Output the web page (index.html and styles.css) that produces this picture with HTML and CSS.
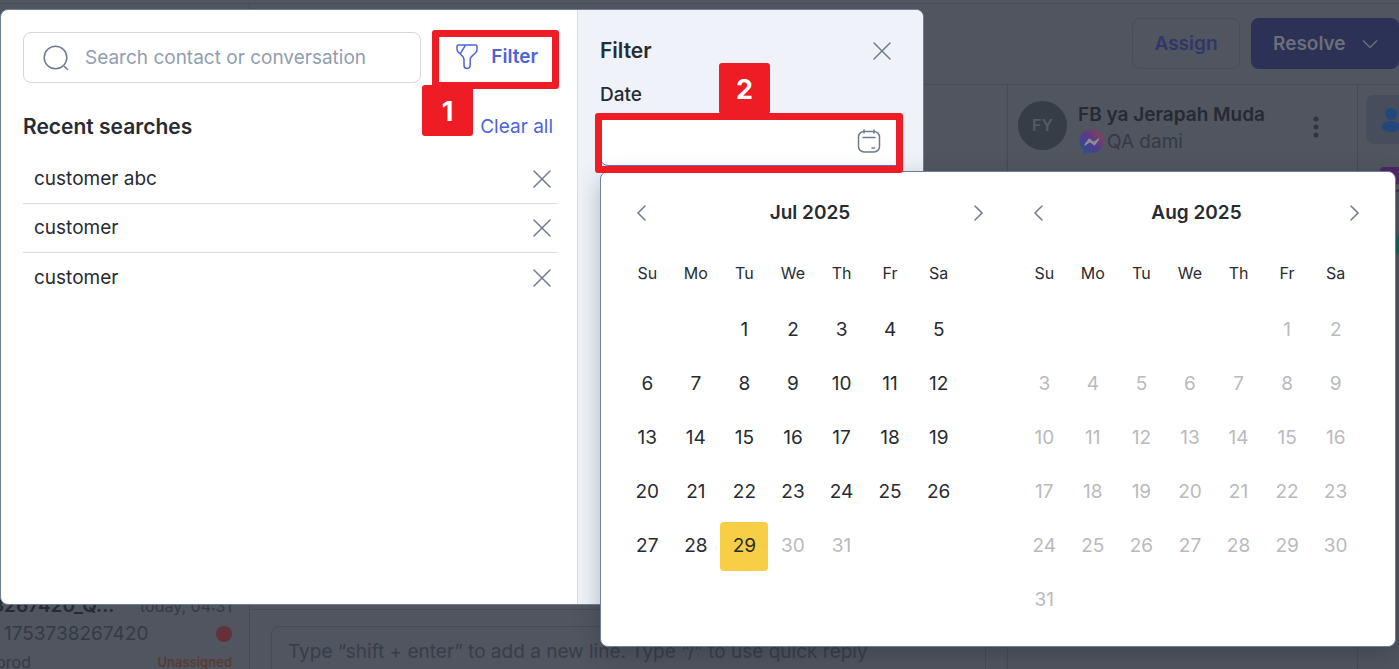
FILE: index.html
```html
<!DOCTYPE html>
<html lang="en">
<head>
  <meta charset="UTF-8">
  <title>Inbox</title>
  <link rel="stylesheet" href="styles.css">
</head>
<body>

<div class="app">
  <aside class="inbox">
    <div class="conversation">
      <div class="conversation-row">
        <span class="conversation-name">3267420_Q...</span>
        <span class="conversation-time">today, 04:31</span>
      </div>
      <div class="conversation-row">
        <span class="conversation-id">1753738267420</span>
        <span class="status-dot"></span>
      </div>
      <div class="conversation-row">
        <span class="conversation-tag">prod</span>
        <span class="unassigned">Unassigned</span>
      </div>
    </div>
  </aside>

  <main class="main">
    <header class="toolbar">
      <button class="btn btn-outline" type="button">Assign</button>
      <button class="btn btn-solid" type="button">Resolve
        <svg width="18" height="18" viewBox="0 0 18 18"><path d="M2 5.500l7 7 7-7"/></svg>
      </button>
    </header>

    <div class="content">
      <section class="thread">
        <div class="composer">
          <textarea class="composer-input" aria-label="Message" placeholder="Type “shift + enter” to add a new line. Type “/” to use quick reply"></textarea>
        </div>
      </section>

      <section class="details">
        <div class="contact">
          <div class="avatar">FY</div>
          <div class="contact-info">
            <div class="contact-name">FB ya Jerapah Muda</div>
            <div class="contact-channel">
              <svg width="26" height="26" viewBox="0 0 24 24">
                <defs>
                  <linearGradient id="messenger" x1="0" y1="1" x2="1" y2="0">
                    <stop offset="0" stop-color="#1d5596"/>
                    <stop offset="0.5" stop-color="#553a88"/>
                    <stop offset="1" stop-color="#91424f"/>
                  </linearGradient>
                </defs>
                <path d="M12.500 0.500C6 0.500 1.500 5.200 1.500 11.500c0 3.300 1.300 6 3.700 8v4l3.700-2c1.300.400 2.300.600 3.600.600 6.500 0 11-4.400 11-10.600S19 .500 12.500 .500z" fill="url(#messenger)"/>
                <path d="M6 15l4.300-5.700 4.200 3 5-3.300-4.300 5.700-4.200-3z" fill="#8d8c97" stroke="#8d8c97"/>
              </svg>
              <span>QA dami</span>
            </div>
          </div>
          <button class="kebab" type="button" aria-label="More">
            <svg width="6" height="22" viewBox="0 0 6 22"><circle cx="3" cy="3" r="2.500"/><circle cx="3" cy="11" r="2.500"/><circle cx="3" cy="19" r="2.500"/></svg>
          </button>
        </div>
      </section>

      <nav class="rail">
        <a class="rail-item rail-active" href="#" aria-label="Contact">
          <svg width="20" height="26" viewBox="0 0 20 26"><circle cx="10" cy="7" r="6"/><ellipse cx="10" cy="19.500" rx="9" ry="5.500"/></svg>
        </a>
        <a class="rail-item" href="#" aria-label="Apps">
          <svg width="22" height="28" viewBox="0 0 22 28"><rect width="22" height="17" rx="4" fill="#4f2566"/><path d="M14 24c3 0 6-1 8-3" fill="none" stroke="#4f2566" stroke-width="2"/></svg>
        </a>
        <a class="rail-item" href="#" aria-label="Activity">
          <svg width="22" height="26" viewBox="0 0 22 26"><circle cx="13" cy="5" r="4" fill="#145f61"/><circle cx="15" cy="16" r="9" fill="#145f61"/></svg>
        </a>
      </nav>
    </div>
  </main>
</div>

<div class="search-modal">
  <section class="search-pane">
    <div class="search-row">
      <label class="search-box">
        <svg width="26" height="26" viewBox="0 0 26 26"><circle cx="12.500" cy="12.500" r="11.300"/><path d="M21.500 21.500l3 3"/></svg>
        <input type="text" aria-label="Search" placeholder="Search contact or conversation">
      </label>
      <button class="filter-btn" type="button">
        <svg width="22" height="26" viewBox="0 0 22 26"><path d="M2.500 1h17c1 0 1.500.700 1.500 1.500v2.700c0 1.300-.700 2.800-1.700 3.800l-3.800 3.600c-.900.800-1.300 1.800-1.300 3v5.200c0 2.500-1.500 3.700-3.200 3.700s-3-1.200-3-3.200v-5.500c0-1.300-.400-2.400-1.200-3.300L2.400 8.200C1.500 7.200 1 6.200 1 5V2.500C1 1.700 1.600 1 2.500 1zM9.500 1.200L4 10.200"/></svg>
        Filter
      </button>
    </div>

    <div class="recent-header">
      <h2>Recent searches</h2>
      <a href="#">Clear all</a>
    </div>

    <ul class="recent-list">
      <li>customer abc
        <button class="close" type="button" aria-label="Remove"><svg width="18" height="18" viewBox="0 0 18 18"><path d="M1 1l16 16M17 1L1 17"/></svg></button>
      </li>
      <li>customer
        <button class="close" type="button" aria-label="Remove"><svg width="18" height="18" viewBox="0 0 18 18"><path d="M1 1l16 16M17 1L1 17"/></svg></button>
      </li>
      <li>customer
        <button class="close" type="button" aria-label="Remove"><svg width="18" height="18" viewBox="0 0 18 18"><path d="M1 1l16 16M17 1L1 17"/></svg></button>
      </li>
    </ul>
  </section>

  <section class="filter-pane">
    <div class="filter-header">
      <h2>Filter</h2>
      <button class="close" type="button" aria-label="Close"><svg width="18" height="18" viewBox="0 0 18 18"><path d="M1 1l16 16M17 1L1 17"/></svg></button>
    </div>
    <label class="date-label" for="date">Date</label>
    <div class="date-box">
      <input id="date" type="text">
      <svg width="24" height="24" viewBox="0 0 24 24"><rect x="1.500" y="2.500" width="21" height="20.500" rx="5.500"/><path d="M7 1v3M17 1v3M6 8.500h12M15 19h2.500"/></svg>
    </div>
  </section>
</div>

<div class="picker">
  <section class="month month-first">
    <div class="month-header">
      <button type="button" aria-label="Previous month"><svg width="12" height="18" viewBox="0 0 12 18"><path d="M10 2L3 9l7 7"/></svg></button>
      <h3>Jul 2025</h3>
      <button type="button" aria-label="Next month"><svg width="12" height="18" viewBox="0 0 12 18"><path d="M2 2l7 7-7 7"/></svg></button>
    </div>
    <table class="days" data-start="2" data-count="31" data-today="29"></table>
  </section>
  <section class="month">
    <div class="month-header">
      <button type="button" aria-label="Previous month"><svg width="12" height="18" viewBox="0 0 12 18"><path d="M10 2L3 9l7 7"/></svg></button>
      <h3>Aug 2025</h3>
      <button type="button" aria-label="Next month"><svg width="12" height="18" viewBox="0 0 12 18"><path d="M2 2l7 7-7 7"/></svg></button>
    </div>
    <table class="days" data-start="5" data-count="31" data-today="0"></table>
  </section>
</div>

<div class="outline outline-filter"></div>
<div class="step step-one">1</div>
<div class="outline outline-date"></div>
<div class="step step-two">2</div>

<script src="script.js"></script>
</body>
</html>
```

FILE: styles.css
```css
* {
  box-sizing: border-box;
}

body {
  margin: 0;
  height: 100vh;
  overflow: hidden;
  position: relative;
  background: #50555f;
  color: #272b33;
  font-family: Inter, "Liberation Sans", sans-serif;
  font-size: 19px;
  line-height: 24px;
}

button, input, textarea {
  font: inherit;
  color: inherit;
  background: none;
  border: none;
  padding: 0;
  outline: none;
}

svg {
  display: block;
  flex: none;
}

h2, h3 {
  margin: 0;
  font-weight: 600;
}

h2 {
  font-size: 21px;
}

h3 {
  font-size: 19px;
}

/* page behind the dialog */
.app {
  display: flex;
  height: 100%;
  padding-top: 3px;
}

.inbox {
  width: 250px;
  flex: none;
  display: flex;
  align-items: flex-end;
  border-top: 1px solid #464b57;
  border-right: 1px solid #464b57;
}

.conversation {
  width: 100%;
  margin-bottom: -7px;
  padding-right: 17px;
  color: #353a46;
}

.conversation-row {
  display: flex;
  justify-content: space-between;
  align-items: center;
  height: 28px;
}

.conversation-name {
  margin-left: -8px;
  font-weight: 600;
  color: #262a33;
}

.conversation-time,
.conversation-tag {
  font-size: 16px;
}

.conversation-id {
  padding-left: 4px;
}

.conversation-tag {
  margin-left: -4px;
}

.status-dot {
  width: 16px;
  height: 16px;
  border-radius: 50%;
  background: #64303a;
}

.unassigned {
  font-size: 13px;
  font-weight: 600;
  color: #583c35;
}

.main {
  flex: 1;
  display: flex;
  flex-direction: column;
  border-top: 1px solid #464b57;
}

.toolbar {
  display: flex;
  justify-content: flex-end;
  gap: 11px;
  height: 81px;
  padding-top: 14px;
  border-bottom: 1px solid #464b57;
}

.btn {
  height: 51px;
  border-radius: 8px;
  font-weight: 600;
}

.btn-outline {
  width: 108px;
  border: 1px solid #484d5a;
  color: #2f3769;
}

.btn-solid {
  display: flex;
  align-items: center;
  gap: 15px;
  width: 148px;
  padding-left: 22px;
  background: #2b3256;
  color: #6a6f7a;
}

.btn-solid svg {
  fill: none;
  stroke: #6a6f7a;
  stroke-width: 1.5;
}

.content {
  flex: 1;
  display: flex;
}

.thread {
  flex: 1;
  display: flex;
  align-items: flex-end;
}

.composer {
  width: 100%;
  height: 60px;
  padding: 16px 21px 0;
  border-top: 1px solid #464b57;
}

.composer-input {
  display: block;
  width: 100%;
  height: 60px;
  padding: 13px 16px;
  border: 1px solid #464b57;
  border-radius: 8px;
  resize: none;
  overflow: hidden;
}

.composer-input::placeholder {
  color: #383d4a;
}

.details {
  width: 350px;
  border-left: 1px solid #464b57;
}

.contact {
  display: flex;
  align-items: flex-start;
  gap: 11px;
  padding: 16px 38px 0 10px;
}

.avatar {
  width: 49px;
  height: 49px;
  border-radius: 50%;
  background: #373d47;
  color: #555a65;
  font-size: 16px;
  font-weight: 600;
  line-height: 49px;
  text-align: center;
}

.contact-info {
  flex: 1;
  color: #353a46;
}

.contact-name {
  line-height: 27px;
  font-weight: 600;
  color: #262a33;
}

.contact-channel {
  display: flex;
  align-items: center;
  gap: 3px;
  height: 27px;
}

.kebab {
  height: 52px;
}

.kebab svg {
  fill: #303541;
}

.rail {
  width: 42px;
  overflow: hidden;
  border-left: 1px solid #464b57;
  padding: 10px 0 0 8px;
}

.rail-item {
  display: flex;
  align-items: center;
  justify-content: center;
  width: 49px;
  height: 49px;
  margin-bottom: 12px;
  border-radius: 8px;
}

.rail-active {
  background: #464d5c;
}

.rail-active svg {
  fill: #23467b;
}

/* search dialog */
.search-modal {
  position: absolute;
  top: 9px;
  bottom: 64px;
  left: 0;
  width: 924px;
  display: flex;
  overflow: hidden;
  background: #fff;
  border: 1px solid #6f7f97;
  border-radius: 8px;
}

.search-pane {
  flex: 1;
  padding: 22px 20px 0 22px;
}

.search-row {
  display: flex;
  gap: 12px;
}

.search-box {
  flex: 1;
  display: flex;
  align-items: center;
  gap: 16px;
  height: 51px;
  padding: 0 19px;
  border: 1px solid #d5d7da;
  border-radius: 8px;
}

.search-box svg,
.date-box svg,
.close svg,
.month-header svg {
  fill: none;
  stroke: #6f7a8f;
  stroke-width: 1.5;
  stroke-linecap: round;
}

.search-box input {
  flex: 1;
  min-width: 0;
}

.search-box input::placeholder {
  color: #929db0;
  opacity: 1;
}

.filter-btn {
  display: flex;
  align-items: center;
  justify-content: flex-end;
  gap: 13px;
  width: 124px;
  padding: 0 19px 2px 0;
  font-weight: 600;
  color: #4e63db;
}

.filter-btn svg {
  fill: none;
  stroke: #4e63db;
  stroke-width: 1.5;
}

.recent-header {
  display: flex;
  align-items: center;
  justify-content: space-between;
  height: 44px;
  margin: 22px 4px 6px 0;
}

.recent-header a {
  color: #4e63db;
  text-decoration: none;
}

.recent-list {
  list-style: none;
  margin: 0;
  padding: 0;
}

.recent-list li {
  display: flex;
  align-items: center;
  justify-content: space-between;
  height: 49px;
  padding: 0 6px 0 11px;
  border-bottom: 1px solid #d9dbde;
}

.recent-list li:last-child {
  border-bottom: none;
}

.filter-pane {
  width: 346px;
  padding: 22px 20px 0 22px;
  background: #eff3f9;
  border-left: 1px solid #d8dce3;
}

.filter-header {
  display: flex;
  align-items: center;
  justify-content: space-between;
  height: 38px;
  padding-right: 12px;
}

.date-label {
  display: block;
  height: 46px;
  line-height: 50px;
  font-weight: 500;
}

.date-box {
  display: flex;
  align-items: center;
  height: 50px;
  padding: 0 21px 0 12px;
  background: #fff;
  border: 1px solid #5b6fe0;
  border-radius: 8px;
}

.date-box input {
  flex: 1;
  min-width: 0;
}

/* date range picker */
.picker {
  position: absolute;
  top: 171px;
  left: 600px;
  width: 796px;
  display: flex;
  gap: 23px;
  padding: 11px 22px 19px;
  background: #fff;
  border: 1px solid #6f7f97;
  border-radius: 8px;
  box-shadow: 0 8px 24px rgba(30, 35, 45, 0.3);
}

.month {
  flex: 1;
}

.month-first {
  flex: none;
  width: 374px;
}

.month-header {
  display: flex;
  align-items: center;
  justify-content: space-between;
  height: 60px;
  padding: 0 12px;
}

.days {
  width: 340px;
  table-layout: fixed;
  border-collapse: collapse;
}

.days th {
  height: 60px;
  padding: 0;
  font-size: 16px;
  font-weight: 400;
}

.days td {
  height: 54px;
  padding: 0;
  text-align: center;
}

.days button {
  width: 48px;
  height: 49px;
  border-radius: 4px;
}

.days button:disabled {
  color: #b9babc;
}

.days .today {
  background: #f7ce46;
}

/* walkthrough marks */
.outline {
  position: absolute;
  border: 7px solid #ee1c25;
  border-radius: 3px;
}

.outline-filter {
  top: 30px;
  left: 432px;
  width: 127px;
  height: 59px;
}

.outline-date {
  top: 113px;
  left: 595px;
  width: 308px;
  height: 60px;
}

.step {
  position: absolute;
  width: 51px;
  height: 51px;
  border-radius: 3px;
  background: #ee1c25;
  color: #fff;
  font-size: 27px;
  font-weight: 700;
  line-height: 53px;
  text-align: center;
}

.step-one {
  top: 85px;
  left: 422px;
}

.step-two {
  top: 63px;
  left: 719px;
}
```

FILE: script.js
```js
document.querySelectorAll('.days').forEach(function (table) {
  var start = Number(table.dataset.start);
  var count = Number(table.dataset.count);
  var today = Number(table.dataset.today);
  var html = '<tr>';

  ['Su', 'Mo', 'Tu', 'We', 'Th', 'Fr', 'Sa'].forEach(function (name) {
    html += '<th>' + name + '</th>';
  });
  html += '</tr>';

  for (var i = 0; i < start + count; i++) {
    var day = i - start + 1;
    if (i % 7 === 0) html += '<tr>';
    if (day < 1) {
      html += '<td></td>';
    } else {
      // days after today can't be picked
      html += '<td><button type="button"' +
        (day === today ? ' class="today"' : '') +
        (day > today ? ' disabled' : '') + '>' + day + '</button></td>';
    }
    if (i % 7 === 6) html += '</tr>';
  }

  table.innerHTML = html;
});
```
